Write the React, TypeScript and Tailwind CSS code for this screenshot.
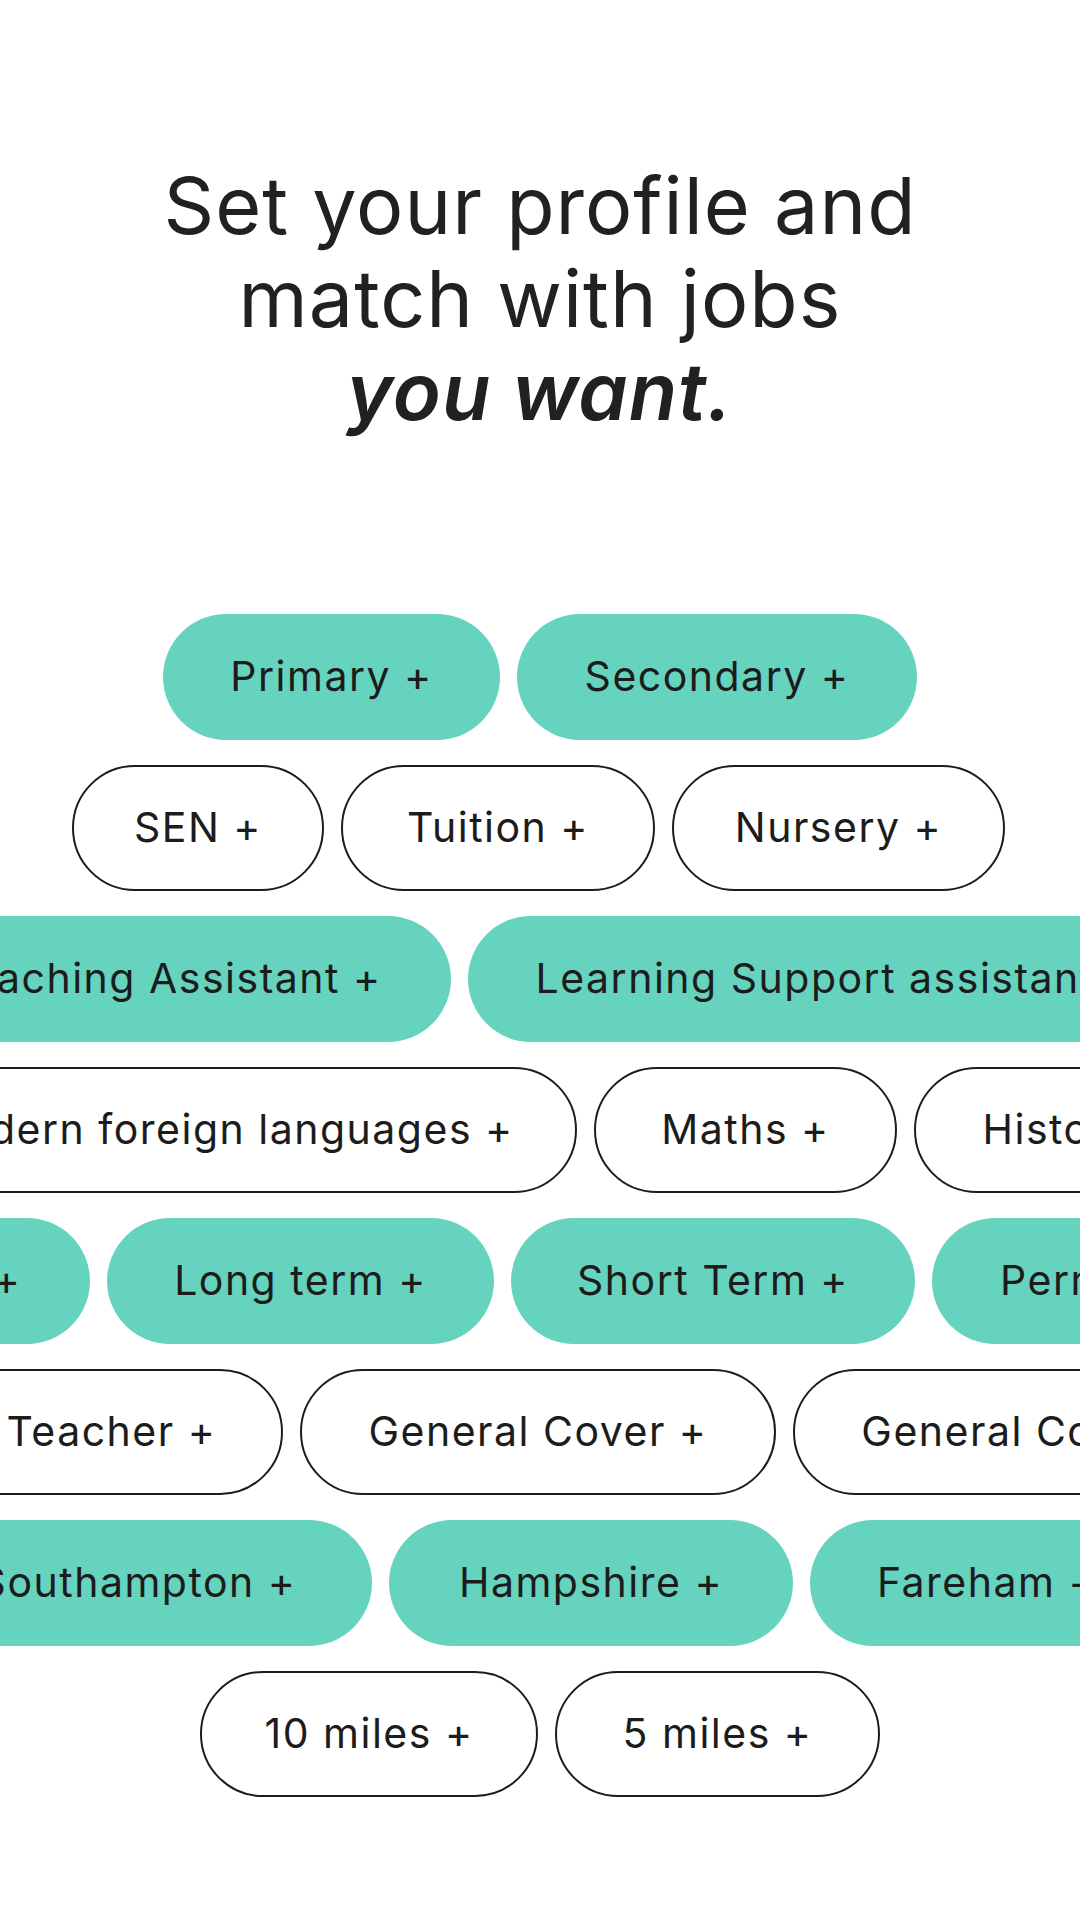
type Chip = { label: string; w: number };

type Row = { filled: boolean; offset: string; chips: Chip[] };

// widths taken straight from the mock so rows line up the same
const rows: Row[] = [
  {
    filled: true,
    offset: "ml-[163px]",
    chips: [
      { label: "Primary +", w: 337 },
      { label: "Secondary +", w: 400 },
    ],
  },
  {
    filled: false,
    offset: "ml-[72px]",
    chips: [
      { label: "SEN +", w: 252 },
      { label: "Tuition +", w: 314 },
      { label: "Nursery +", w: 333 },
    ],
  },
  {
    filled: true,
    offset: "ml-[-123px]",
    chips: [
      { label: "Teaching Assistant +", w: 574 },
      { label: "Learning Support assistant +", w: 736 },
    ],
  },
  {
    filled: false,
    offset: "ml-[-138px]",
    chips: [
      { label: "Modern foreign languages +", w: 715 },
      { label: "Maths +", w: 303 },
      { label: "History +", w: 328 },
    ],
  },
  {
    filled: true,
    offset: "ml-[-232px]",
    chips: [
      { label: "Supply +", w: 322 },
      { label: "Long term +", w: 387 },
      { label: "Short Term +", w: 404 },
      { label: "Permanent +", w: 402 },
    ],
  },
  {
    filled: false,
    offset: "ml-[-216px]",
    chips: [
      { label: "Supply Teacher +", w: 499 },
      { label: "General Cover +", w: 476 },
      { label: "General Cover Supervisor +", w: 714 },
    ],
  },
  {
    filled: true,
    offset: "ml-[-96px]",
    chips: [
      { label: "Southampton +", w: 468 },
      { label: "Hampshire +", w: 404 },
      { label: "Fareham +", w: 354 },
    ],
  },
  {
    filled: false,
    offset: "ml-[200px]",
    chips: [
      { label: "10 miles +", w: 338 },
      { label: "5 miles +", w: 325 },
    ],
  },
];

function Pill({ chip, filled }: { chip: Chip; filled: boolean }) {
  return (
    <button
      style={{ width: chip.w }}
      className={
        "h-[126px] shrink-0 rounded-full flex items-center justify-center whitespace-nowrap text-[41px] tracking-[1.5px] text-[#1c1c1c] " +
        (filled ? "bg-[#66d3bf]" : "bg-white border-2 border-[#1c1c1c]")
      }>
      {chip.label}
    </button>
  );
}

export default function App() {
  return (
    <div
      className="w-[1080px] h-[1920px] bg-white overflow-hidden"
      style={{ fontFamily: "Inter, 'Noto Sans', sans-serif" }}>
      <h1 className="pt-[159px] text-center text-[79px] leading-[93px] font-normal text-[#212121] tracking-[1px]">
        Set your profile and
        <br />
        match with jobs
        <br />
        <span className="font-semibold italic">you want.</span>
      </h1>

      <div className="mt-[176px] flex flex-col gap-[25px]">
        {rows.map((row, i) => (
          <div key={i} className="flex gap-[17px] w-full">
            <div className={"flex gap-[17px] shrink-0 " + row.offset}>
              {row.chips.map((c) => (
                <Pill key={c.label} chip={c} filled={row.filled} />
              ))}
            </div>
          </div>
        ))}
      </div>
    </div>
  );
}
